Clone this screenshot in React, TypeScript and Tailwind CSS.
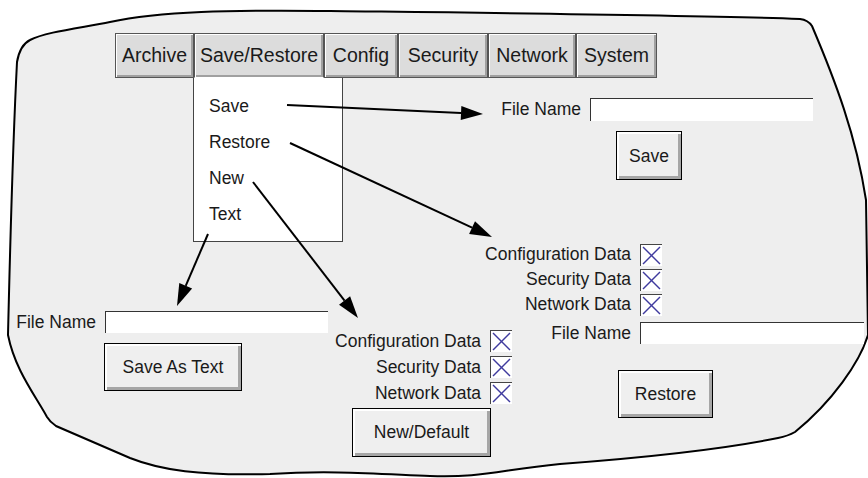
import React from 'react';

const tabs = [
  { label: 'Archive', w: 'w-[79px]' },
  { label: 'Save/Restore', w: 'w-[130px]', active: true },
  { label: 'Config', w: 'w-[74px]' },
  { label: 'Security', w: 'w-[90px]' },
  { label: 'Network', w: 'w-[88px]' },
  { label: 'System', w: 'w-[81px]' },
];

const menuItems = ['Save', 'Restore', 'New', 'Text'];
const dataRows = ['Configuration Data', 'Security Data', 'Network Data'];

const btn =
  'flex items-center justify-center bg-[#efefef] border border-black shadow-[inset_2px_2px_0_#ffffff,inset_-3px_-3px_0_#a6a6a6] text-[17.5px] text-[#1a1a1a]';
const field = 'bg-white border-t border-l border-[#333]';

const Arrow = ({ x1, y1, x2, y2 }: { x1: number; y1: number; x2: number; y2: number }) => {
  const a = Math.atan2(y2 - y1, x2 - x1);
  const len = 22;
  const hw = 7;
  const bx = x2 - len * Math.cos(a);
  const by = y2 - len * Math.sin(a);
  const px = -Math.sin(a) * hw;
  const py = Math.cos(a) * hw;
  return (
    <g>
      <line x1={x1} y1={y1} x2={bx} y2={by} stroke="black" strokeWidth={2} />
      <polygon points={`${x2},${y2} ${bx + px},${by + py} ${bx - px},${by - py}`} fill="black" />
    </g>
  );
};

const CheckBox = () => (
  <div className="w-[22px] h-[22px] bg-white border-t border-l border-[#444]">
    <svg width="21" height="21" viewBox="0 0 21 21">
      <line x1="2" y1="2" x2="19" y2="19" stroke="#3f3a9e" strokeWidth="1.4" />
      <line x1="19" y1="2" x2="2" y2="19" stroke="#3f3a9e" strokeWidth="1.4" />
    </svg>
  </div>
);

const App = () => {
  return (
    <div
      className="relative w-[868px] h-[478px] bg-white overflow-hidden text-[#1a1a1a]"
      style={{ fontFamily: '"Liberation Sans", Arial, sans-serif' }}
    >
      {/* Outline of the screen */}
      <svg className="absolute inset-0" width="868" height="478" viewBox="0 0 868 478">
        <path
          d="M 30 40 C 45 32, 80 28, 110 22 C 160 11, 230 10, 330 11 C 500 13, 700 15, 800 19 Q 808 20, 812 26 C 835 80, 856 135, 866 200 L 868 335 C 860 362, 832 402, 795 432 Q 788 436, 778 438 C 720 450, 640 458, 560 464 C 500 470, 480 478, 430 476 C 380 474, 330 470, 270 474 C 200 476, 160 470, 130 458 L 56 426 Q 50 422, 47 417 C 35 395, 15 370, 8 335 C 10 250, 14 120, 17 62 Q 20 45, 30 40 Z"
          fill="#eeeeee"
          stroke="black"
          strokeWidth="2"
        />
      </svg>

      {/* Menu bar */}
      <div className="absolute left-[115px] top-[33px] flex">
        {tabs.map((t) => (
          <div
            key={t.label}
            className={`${t.w} h-[45px] flex items-center justify-center text-[19.5px] bg-[#dcdcdc] border border-[#555] shadow-[inset_1px_1px_0_#ffffff,inset_-2px_-2px_0_#a0a0a0] ${
              t.active ? 'border-b-white' : ''
            }`}
          >
            {t.label}
          </div>
        ))}
      </div>

      {/* Dropdown */}
      <div className="absolute left-[193px] top-[78px] w-[150px] h-[164px] bg-white border border-t-0 border-[#444] pt-[10px] pl-[15px]">
        {menuItems.map((m) => (
          <div key={m} className="h-[36px] flex items-center text-[17.5px]">
            {m}
          </div>
        ))}
      </div>

      {/* Save */}
      <div className="absolute left-[490px] top-[96px] flex flex-col">
        <div className="flex items-center gap-[9px] text-[17.5px]">
          <span className="w-[91px] text-right">File Name</span>
          <div className={`${field} w-[223px] h-[23px]`} />
        </div>
        <div className={`${btn} mt-[9px] ml-[126px] w-[66px] h-[49px]`}>Save</div>
      </div>

      {/* Restore */}
      <div className="absolute left-[470px] top-[242px] flex flex-col">
        <div className="grid grid-cols-[161px_auto] gap-x-[9px] text-[17.5px]">
          {dataRows.map((r) => (
            <React.Fragment key={r}>
              <div className="h-[25px] flex items-center justify-end">{r}</div>
              <div className="h-[25px] flex items-center">
                <CheckBox />
              </div>
            </React.Fragment>
          ))}
          <div className="h-[22px] mt-[5px] flex items-center justify-end">File Name</div>
          <div className={`${field} mt-[5px] w-[224px] h-[22px]`} />
        </div>
        <div className={`${btn} mt-[26px] ml-[148px] w-[95px] h-[48px]`}>Restore</div>
      </div>

      {/* Text */}
      <div className="absolute left-[8px] top-[309px] flex flex-col">
        <div className="flex items-center gap-[9px] text-[17.5px]">
          <span className="w-[88px] text-right">File Name</span>
          <div className={`${field} w-[223px] h-[22px]`} />
        </div>
        <div className={`${btn} mt-[8px] ml-[96px] w-[138px] h-[48px]`}>Save As Text</div>
      </div>

      {/* New */}
      <div className="absolute left-[320px] top-[328px] flex flex-col">
        <div className="grid grid-cols-[161px_auto] gap-x-[9px] text-[17.5px]">
          {dataRows.map((r) => (
            <React.Fragment key={r}>
              <div className="h-[26px] flex items-center justify-end">{r}</div>
              <div className="h-[26px] flex items-center">
                <CheckBox />
              </div>
            </React.Fragment>
          ))}
        </div>
        <div className={`${btn} mt-[2px] ml-[32px] w-[139px] h-[49px]`}>New/Default</div>
      </div>

      {/* Arrows */}
      <svg className="absolute inset-0 pointer-events-none" width="868" height="478" viewBox="0 0 868 478">
        <Arrow x1={287} y1={105} x2={483} y2={114} />
        <Arrow x1={290} y1={143} x2={492} y2={237} />
        <Arrow x1={253} y1={182} x2={358} y2={318} />
        <Arrow x1={208} y1={234} x2={177} y2={306} />
      </svg>
    </div>
  );
};

export default App;
